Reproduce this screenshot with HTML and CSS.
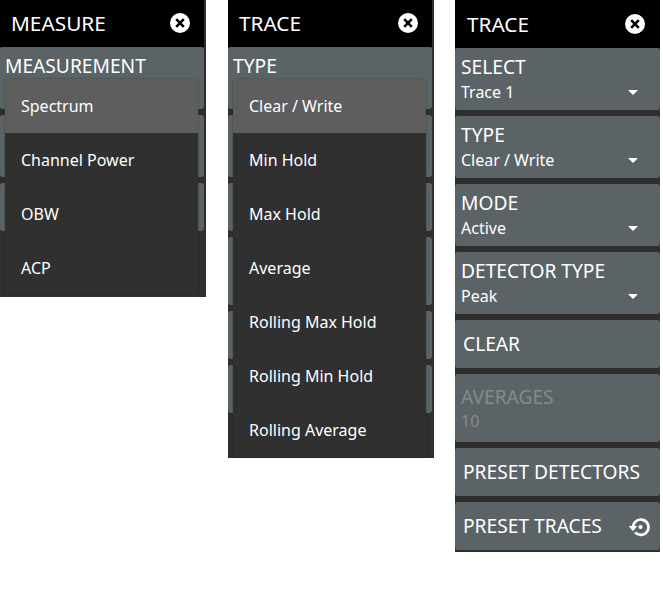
FILE: index.html
```html
<!DOCTYPE html>
<html lang="en">
<head>
<meta charset="utf-8">
<title>Trace menus</title>
<link rel="stylesheet" href="styles.css">
</head>
<body>
<div class="stage">
  <section class="panel panel-measure">
    <header class="head"><span>MEASURE</span>
      <svg class="close" viewBox="0 0 20 20"><circle cx="10" cy="10" r="10" fill="#fff"/><path d="M6.2 6.2l7.6 7.6M13.8 6.2l-7.6 7.6" stroke="#000" stroke-width="2.6" fill="none"/></svg>
    </header>
    <div class="stack">
      <div class="item tall"><div class="label">MEASUREMENT</div></div>
      <div class="item tall"></div>
      <div class="item short"></div>
    </div>
    <ul class="menu">
      <li class="on">Spectrum</li><li>Channel Power</li><li>OBW</li><li>ACP</li>
    </ul>
  </section>

  <section class="panel panel-type">
    <header class="head"><span>TRACE</span>
      <svg class="close" viewBox="0 0 20 20"><circle cx="10" cy="10" r="10" fill="#fff"/><path d="M6.2 6.2l7.6 7.6M13.8 6.2l-7.6 7.6" stroke="#000" stroke-width="2.6" fill="none"/></svg>
    </header>
    <div class="stack">
      <div class="item tall"><div class="label">TYPE</div></div>
      <div class="item tall"></div>
      <div class="item short"></div>
      <div class="item taller"></div>
      <div class="item short"></div>
      <div class="item short"></div>
    </div>
    <ul class="menu">
      <li class="on">Clear / Write</li><li>Min Hold</li><li>Max Hold</li><li>Average</li><li>Rolling Max Hold</li><li>Rolling Min Hold</li><li>Rolling Average</li>
    </ul>
  </section>

  <section class="panel panel-trace">
    <header class="head"><span>TRACE</span>
      <svg class="close" viewBox="0 0 20 20"><circle cx="10" cy="10" r="10" fill="#fff"/><path d="M6.2 6.2l7.6 7.6M13.8 6.2l-7.6 7.6" stroke="#000" stroke-width="2.6" fill="none"/></svg>
    </header>
    <div class="stack">
      <div class="item tall"><div class="label">SELECT</div><div class="value">Trace 1</div><i class="caret"></i></div>
      <div class="item tall"><div class="label">TYPE</div><div class="value">Clear / Write</div><i class="caret"></i></div>
      <div class="item tall"><div class="label">MODE</div><div class="value">Active</div><i class="caret"></i></div>
      <div class="item tall"><div class="label">DETECTOR TYPE</div><div class="value">Peak</div><i class="caret"></i></div>
      <div class="item short action"><span>CLEAR</span></div>
      <div class="item taller off"><div class="label">AVERAGES</div><div class="value">10</div></div>
      <div class="item short action"><span>PRESET DETECTORS</span></div>
      <div class="item short action"><span>PRESET TRACES</span>
        <svg class="reset" viewBox="0 0 20 18"><path d="M4.6 9A7 7 0 1 1 6.4 13.9" fill="none" stroke="#fff" stroke-width="2.4"/><path d="M0.6 8.2H8.4L4.5 12.8z" fill="#fff"/><circle cx="11.4" cy="9" r="1.9" fill="#fff"/></svg>
      </div>
    </div>
  </section>
</div>
</body>
</html>
```
FILE: styles.css
```css
* { box-sizing: border-box; }
html, body { margin: 0; background: #fff; }
body { font-family: "Noto Sans", "Open Sans", sans-serif; color: #fff; }
.stage { display: flex; align-items: flex-start; width: 663px; height: 615px; overflow: hidden; }
.panel { position: relative; width: 206px; background: #2f2f2f; padding-right: 2px; flex: none; }
.panel-measure { height: 297px; }
.panel-type { height: 458px; margin-left: 22px; }
.panel-trace { width: 205px; height: 552px; margin-left: 21px; padding-right: 0; }
.head { height: 47px; background: #000; display: flex; align-items: center; justify-content: space-between; padding: 0 14px 0 11px; font-size: 20.8px; }
.head span { margin-top: -2px; }
.head .close { margin-top: -1px; }
.panel-trace .head { height: 48px; padding: 0 15px 0 12px; }
.panel-trace .head span { margin-top: 0; }
.close { width: 20px; height: 20px; display: block; }
.stack { display: flex; flex-direction: column; gap: 6px; }
.item { position: relative; background: #5b6366; border-radius: 3px; padding: 0 6px; }
.tall { height: 62px; }
.taller { height: 68px; }
.short { height: 48px; }
.label { font-size: 19.2px; line-height: 24px; padding-top: 7px; margin-left: -1px; }
.panel-trace .label { margin-left: 0; }
.value { font-size: 16px; line-height: 20px; margin-top: 3px; }
.caret { position: absolute; right: 22px; top: 42px; width: 0; height: 0; border: 5px solid transparent; border-top-color: #fff; border-bottom-width: 0; }
.action { display: flex; align-items: center; justify-content: space-between; font-size: 19.2px; padding: 0 10px 0 8px; }
.action span { margin-top: -2px; }
.off .label { color: #848b8e; padding-top: 11px; }
.off .value { color: #848b8e; margin-top: 2px; }
.reset { width: 22px; height: 20px; display: block; margin-top: 2px; }
.menu { position: absolute; left: 5px; top: 79px; width: 193px; margin: 0; padding: 0; list-style: none; background: #303030; box-shadow: 0 0 2px rgba(0,0,0,.4); border-radius: 2px; }
.menu li { height: 54px; padding-left: 16px; display: flex; align-items: center; font-size: 16px; }
.menu .on { background: #5e5e5e; }
```
